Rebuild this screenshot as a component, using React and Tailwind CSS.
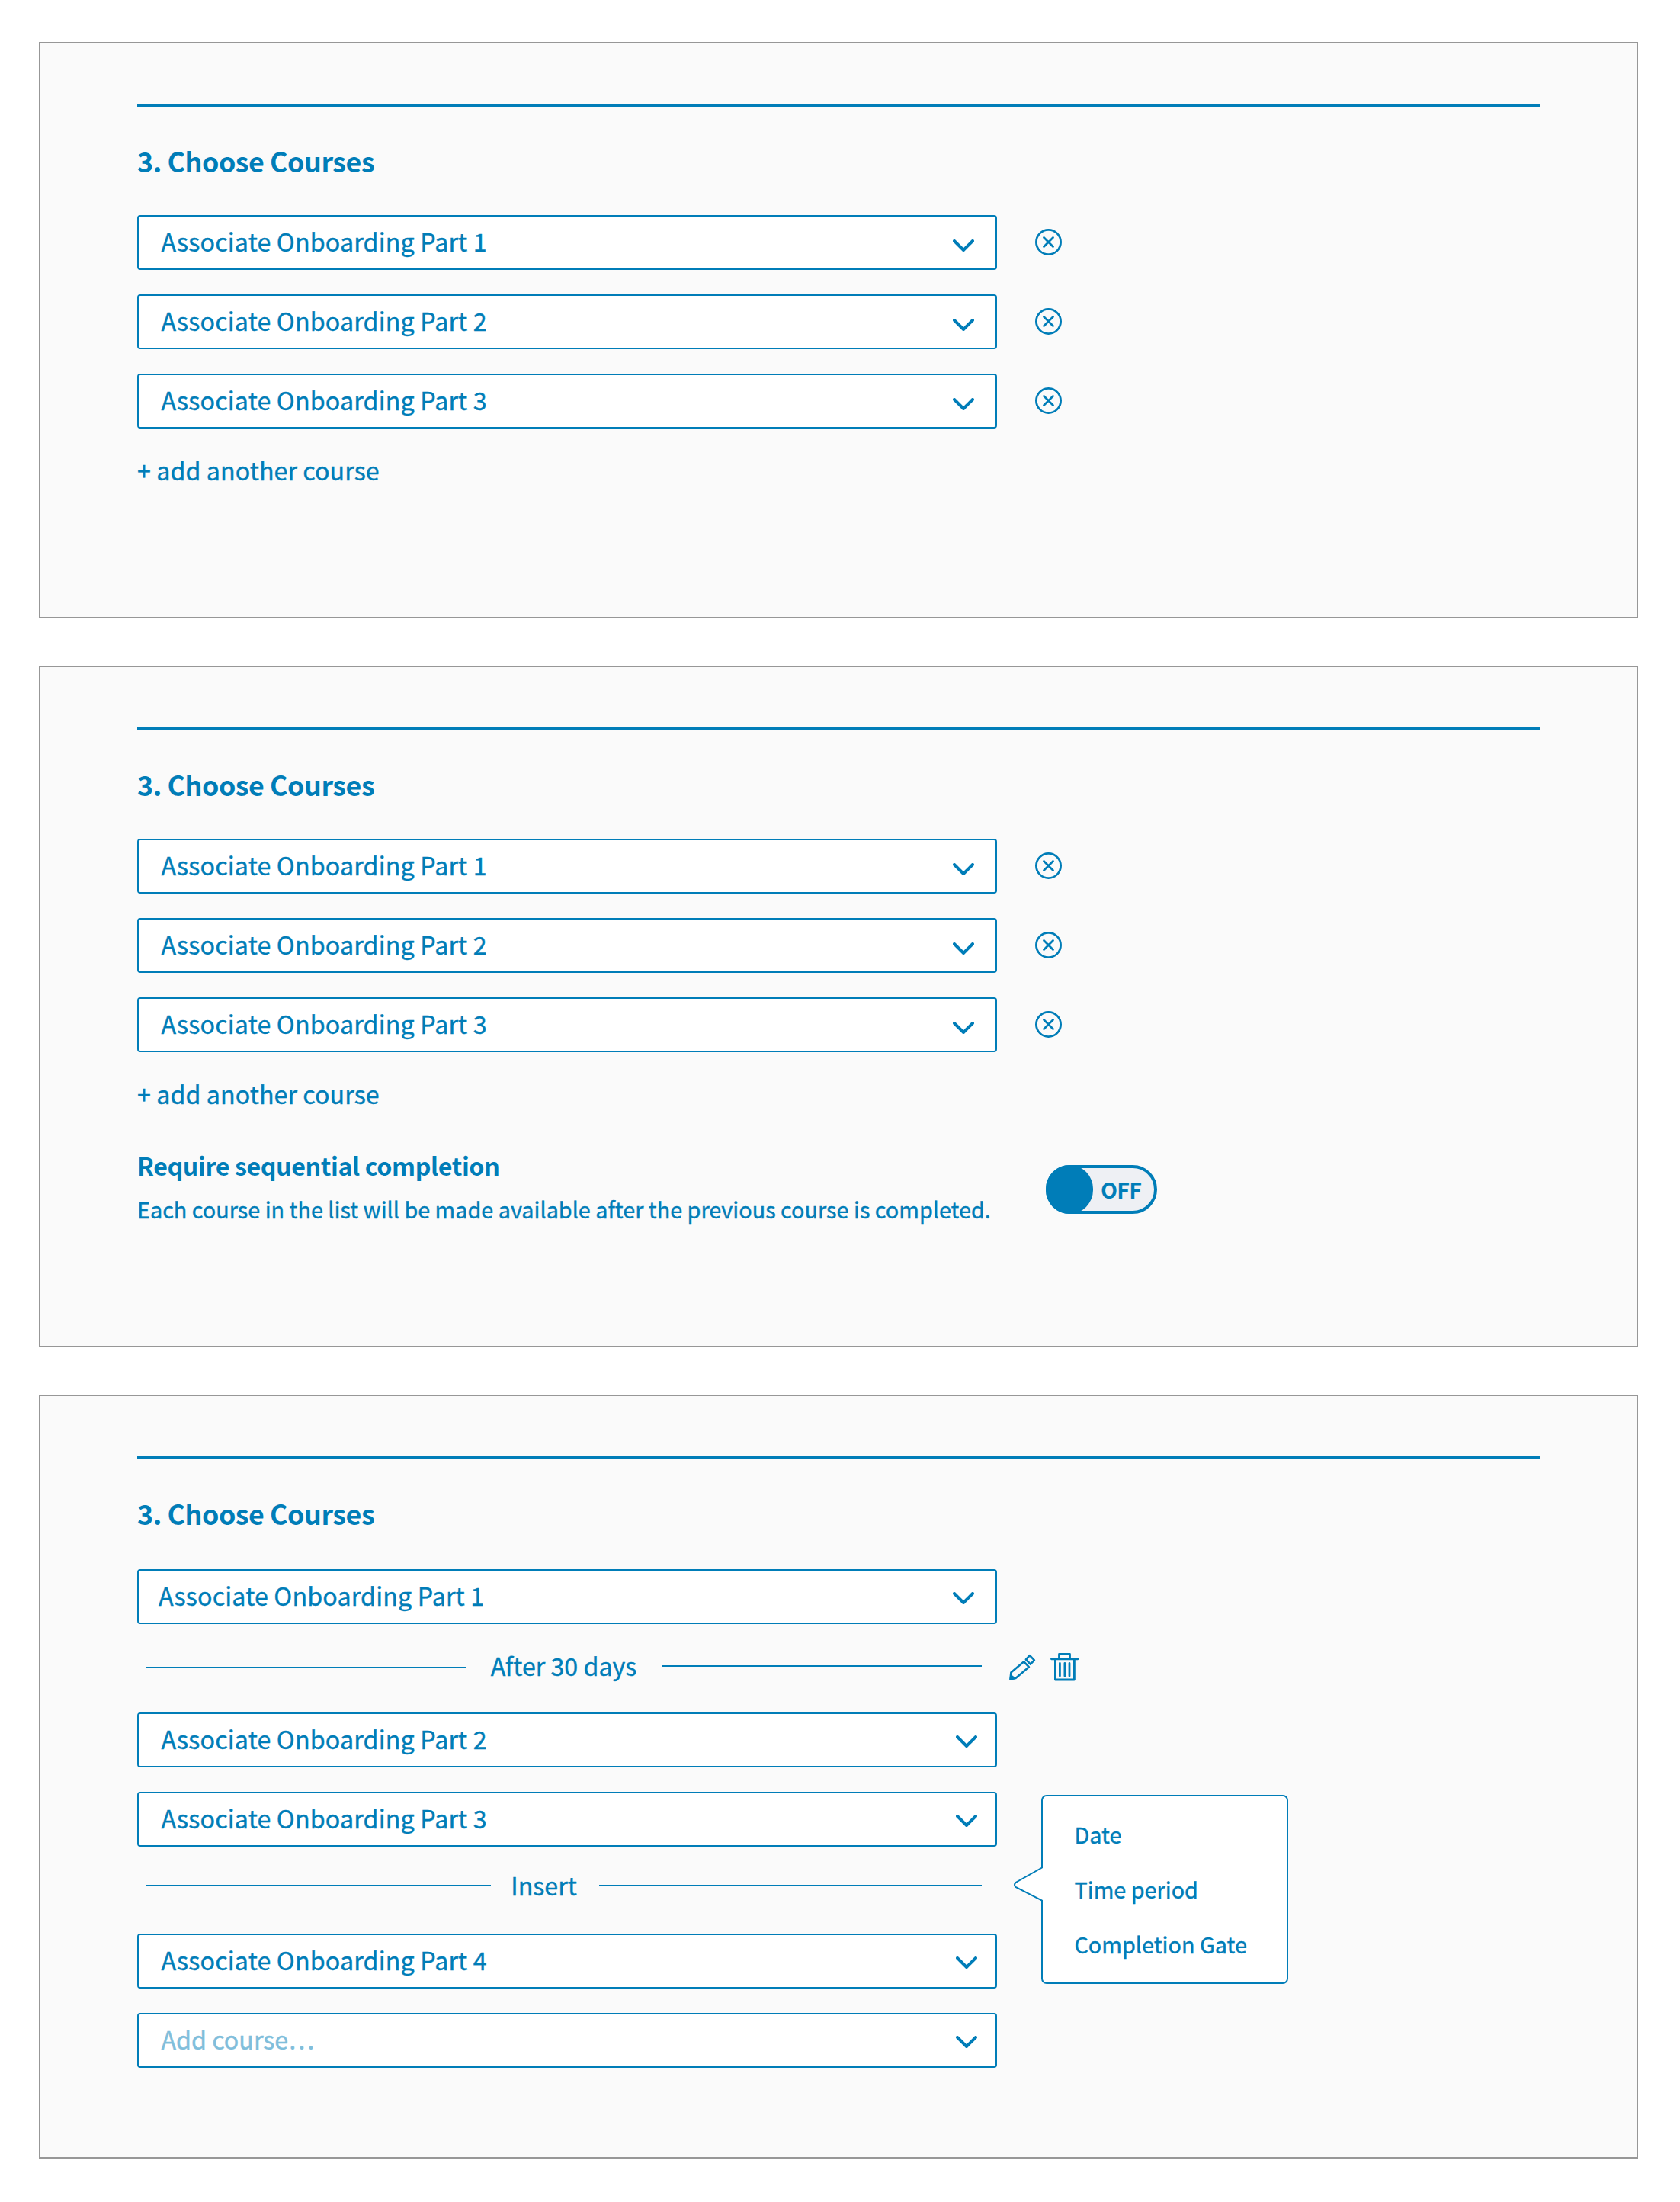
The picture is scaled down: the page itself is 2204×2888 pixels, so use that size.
const SANS = "font-['Noto_Sans_CJK_SC',sans-serif]";

function Chevron() {
  return (
    <svg className="h-4 w-7" viewBox="0 0 28 16" fill="none" stroke="#007db8" strokeWidth="4" strokeLinecap="round" strokeLinejoin="round">
      <path d="M2 2l12 12L26 2" />
    </svg>
  );
}

function RemoveIcon() {
  return (
    <svg className="mb-px ml-[50px] h-[35px] w-[35px]" viewBox="0 0 35 35" fill="none" stroke="#007db8" strokeWidth="2.8" strokeLinecap="round">
      <circle cx="17.5" cy="17.5" r="16.1" />
      <path d="M11.5 11.5l12 12M23.5 11.5l-12 12" />
    </svg>
  );
}

function PencilIcon() {
  return (
    <svg className="h-[37px] w-[36px]" viewBox="0 0 36 37" fill="none" stroke="#007db8" strokeWidth="2.6" strokeLinejoin="round">
      <path d="M3.400 25.500L20.300 11.300l6.600 7L9.500 33l-7 1.300z" />
      <path d="M22.900 8.500l5-5.300 6 6.200-5 5.300z" />
      <path d="M1.300 35.700l.9-7.500q5.200.8 6 6z" fill="#007db8" stroke="none" />
    </svg>
  );
}

function TrashIcon() {
  return (
    <svg className="h-[37px] w-[38px]" viewBox="0 0 38 37" fill="none" stroke="#007db8" strokeWidth="2.8" strokeLinecap="round" strokeLinejoin="round">
      <path d="M1.400 7.800h34.600M11.500 7V1.400h14V7M6.400 8v27h25V8" />
      <path d="M12.400 13.500v16.500M18.900 13.500v16.500M25 13.500v16.500" />
    </svg>
  );
}

function Select({ label, placeholder, text = "pl-[29.5px]", chevron = "pr-[28px] pt-2" }) {
  return (
    <div className={`flex h-[72px] w-[1128px] items-center justify-between rounded-[4px] border-2 border-[#007db8] bg-white ${text}`}>
      <span className={`mb-1 text-[32.2px] leading-[48px] ${placeholder ? "text-[#80bedb]" : "tracking-[0.17px]"}`}>{label}</span>
      <span className={chevron}>
        <Chevron />
      </span>
    </div>
  );
}

function Panel({ size, children, gap = "mb-[42px]" }) {
  return (
    <section className={`w-[2098px] border-2 border-[#979797] bg-[#fafafa] pt-[79px] pr-[127px] pl-[127px] ${size}`}>
      <div className="h-1 bg-[#007db8]" />
      <h2 className={`mt-10 text-[35.8px] leading-[60px] font-bold tracking-[-0.45px] [-webkit-text-stroke:0px] ${gap}`}>3. Choose Courses</h2>
      {children}
    </section>
  );
}

function CourseList() {
  return (
    <>
      <div className="flex flex-col gap-8">
        {[1, 2, 3].map((n) => (
          <div key={n} className="flex items-center">
            <Select label={`Associate Onboarding Part ${n}`} />
            <RemoveIcon />
          </div>
        ))}
      </div>
      <div className="mt-[30px] text-[32.2px] leading-[48px] tracking-[0.08px]">+ add another course</div>
    </>
  );
}

function Toggle() {
  return (
    <div className="mt-6 flex h-16 w-[146px] items-center rounded-full border-4 border-[#007db8] bg-[#eef0f4]">
      <div className="-ml-1 h-16 w-[62px] shrink-0 rounded-full bg-[#007db8]" />
      <span className="ml-[10px] text-[28.6px] leading-10 font-bold tracking-[-0.7px] [-webkit-text-stroke:0px]">OFF</span>
    </div>
  );
}

function Popover() {
  return (
    <div className="absolute top-[2354px] left-[1329px] flex h-[248px] w-[361px]">
      <svg className="absolute inset-0 h-[248px] w-[361px]" viewBox="0 0 361 248" fill="#fff" stroke="#007db8" strokeWidth="2">
        <path d="M38 7a6 6 0 0 1 6-6h310a6 6 0 0 1 6 6v234a6 6 0 0 1-6 6H44a6 6 0 0 1-6-6V138.500L3.500 121q-3-3 0-6L38 95.500z" />
      </svg>
      <div className="relative flex flex-col gap-8 pt-8 pl-[80.5px] text-[28.8px] leading-10">
        <span>Date</span>
        <span>Time period</span>
        <span>Completion Gate</span>
      </div>
    </div>
  );
}

export default function App() {
  return (
    <main className={`relative flex h-[2888px] w-[2204px] flex-col gap-[62px] bg-white pt-[55px] pl-[51px] text-[#007db8] [-webkit-text-stroke:0.4px] ${SANS}`}>
      <Panel size="h-[756px]">
        <CourseList />
      </Panel>

      <Panel size="h-[894px]">
        <CourseList />
        <div className="mt-[46px] flex items-start">
          <div className="w-[1192px]">
            <div className="text-[32.2px] leading-[48px] font-bold tracking-[-0.38px] [-webkit-text-stroke:0px]">Require sequential completion</div>
            <div className="mt-[14px] text-[28.8px] leading-10 whitespace-nowrap">
              Each course in the list will be made available after the previous course is completed.
            </div>
          </div>
          <Toggle />
        </div>
      </Panel>

      <Panel size="h-[1002px]" gap="mb-[44px]">
        <Select label="Associate Onboarding Part 1" text="pl-[26px]" chevron="pr-[28px] pt-1" />
        <div className="flex h-[116px] items-center pl-3">
          <div className="-mt-0.5 h-0.5 w-[420px] bg-[#007db8]" />
          <span className="-mt-2 w-[256px] pr-px text-center text-[32.2px] leading-[48px]">After 30 days</span>
          <div className="-mt-1.5 h-0.5 w-[420px] bg-[#007db8]" />
          <div className="-mt-[3px] ml-[35px] flex items-center gap-[19px]">
            <PencilIcon />
            <TrashIcon />
          </div>
        </div>
        <div className="flex flex-col gap-8">
          <Select label="Associate Onboarding Part 2" chevron="pr-[24px] pt-1" />
          <Select label="Associate Onboarding Part 3" chevron="pr-[24px] pt-1" />
        </div>
        <div className="flex h-[114px] items-center pl-3">
          <div className="-mt-3 h-0.5 w-[452px] bg-[#007db8]" />
          <span className="-mt-3.5 w-[142px] pr-[3px] text-center text-[32.2px] leading-[48px]">Insert</span>
          <div className="-mt-3 h-0.5 w-[502px] bg-[#007db8]" />
        </div>
        <div className="flex flex-col gap-8">
          <Select label="Associate Onboarding Part 4" chevron="pr-[24px] pt-1" />
          <Select label="Add course…" placeholder chevron="pr-[24px] pt-1" />
        </div>
      </Panel>
      <Popover />
    </main>
  );
}
